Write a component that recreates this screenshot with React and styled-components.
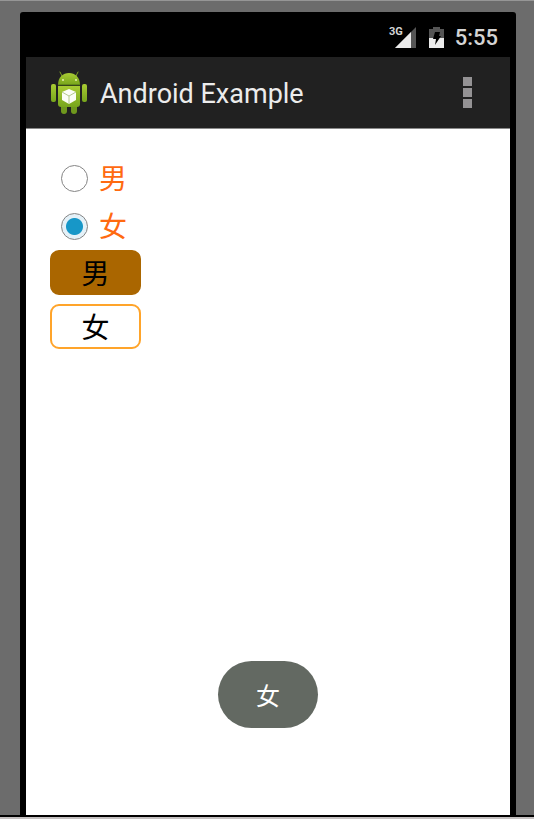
import React, { useState } from "react"
import styled, { createGlobalStyle } from "styled-components"

const GlobalStyle = createGlobalStyle`
  * {
    box-sizing: border-box;
  }

  body {
    margin: 0;
    font-family: Roboto, "Noto Sans CJK SC", sans-serif;
  }
`

const Desk = styled.div`
  display: flex;
  flex-direction: column;
  min-height: 100vh;
  padding: 11px 18px 0 20px;
  background: #6c6c6c;
  border-top: 1px solid #969696;
`

const Phone = styled.div`
  flex: 1;
  display: flex;
  flex-direction: column;
  padding: 0 6px;
  background: #000;
  border-radius: 3px 3px 0 0;
`

const Footer = styled.footer`
  height: 4px;
  margin: 0 -18px 0 -20px;
  background: #c4c0c0;
  border-top: 2px solid #000;
`

const StatusBar = styled.div`
  display: flex;
  align-items: center;
  justify-content: flex-end;
  height: 45px;
  padding: 6px 12px 0 0;
  color: #d4d4d4;
`

const Signal = styled.div`
  display: flex;
  align-items: flex-start;
  height: 22px;
  margin-right: 13px;
  font-size: 11px;
  font-weight: 700;
  line-height: 10px;

  svg {
    margin-left: -9px;
  }
`

const Clock = styled.time`
  margin-left: 11px;
  font-size: 22px;
  line-height: 26px;
  font-weight: 500;
`

const ActionBar = styled.header`
  display: flex;
  align-items: center;
  height: 72px;
  padding: 0 38px 0 24px;
  background: #212121;
  border-bottom: 1px solid #8a8a8a;
`

const Title = styled.h1`
  flex: 1;
  margin: 0 0 0 12px;
  padding-top: 2px;
  color: #ececec;
  font-size: 27px;
  font-weight: 400;
  line-height: 32px;
`

const MenuButton = styled.button`
  display: grid;
  gap: 2px;
  padding: 0;
  background: none;
  border: 0;
`

const Dot = styled.span`
  width: 9px;
  height: 9px;
  background: #949294;
`

const Screen = styled.main`
  position: relative;
  flex: 1;
  display: flex;
  flex-direction: column;
  align-items: flex-start;
  padding: 25px 24px;
  background: #fff;
`

const RadioRow = styled.label`
  display: flex;
  align-items: center;
  gap: 11px;
  height: 48px;
  padding-left: 11px;
  color: #ff6a10;
  font-size: 28px;
  line-height: 40px;
`

const RadioText = styled.span`
  padding-top: 4px;
`

const Radio = styled.input`
  appearance: none;
  width: 27px;
  height: 27px;
  margin: 0;
  background: #fff;
  border: 1px solid #858585;
  border-radius: 50%;

  &:checked {
    background: radial-gradient(circle, #1797c8 8px, #e4f1f8 9px);
  }
`

const Choices = styled.div`
  display: grid;
  gap: 9px;
`

const Choice = styled.button`
  width: 91px;
  height: 45px;
  padding: 4px 0 0;
  color: #000;
  background: ${props => (props.$filled ? "#aa6600" : "#fff")};
  border: 2px solid ${props => (props.$filled ? "#aa6600" : "#ffa42a")};
  border-radius: 9px;
  font-family: inherit;
  font-size: 28px;
  line-height: 36px;
`

const Toast = styled.div`
  position: absolute;
  bottom: 87px;
  left: 50%;
  transform: translateX(-50%);
  padding: 20px 38px 15px;
  color: #fff;
  background: #636962;
  border-radius: 34px;
  font-size: 24px;
  line-height: 32px;
`

function SignalIcon() {
  return (
    <svg width="22" height="22" viewBox="0 0 22 22" aria-hidden="true">
      <path d="M22 0V21H1Z" fill="#555" />
      <path d="M17 5V21H1Z" fill="#ebebeb" />
    </svg>
  )
}

function BatteryIcon() {
  return (
    <svg width="15" height="22" viewBox="0 0 15 22" aria-hidden="true">
      <path d="M0 2H4V0H11V2H15V12H0Z" fill="#555" />
      <path d="M0 11H15V21H0Z" fill="#ebebeb" />
      <path d="M6 5H11L10 9H12L6 18L7 12H4Z" fill="#000" />
    </svg>
  )
}

function AndroidLogo() {
  return (
    <svg width="38" height="44" viewBox="0 0 38 44" aria-hidden="true">
      <defs>
        <linearGradient id="robot" x1="0" y1="0" x2="0" y2="1">
          <stop offset="0" stopColor="#a9cc33" />
          <stop offset="1" stopColor="#77a51c" />
        </linearGradient>
      </defs>
      <path
        d="M12 5L10 1M26 5L28 1"
        stroke="#7c9e26"
        strokeWidth="1"
        strokeLinecap="round"
      />
      <path d="M8 14C8 6 13 2 19 2S30 6 30 14Z" fill="url(#robot)" />
      <circle cx="13" cy="9" r="1" fill="#e6f2b4" />
      <circle cx="26" cy="9" r="1" fill="#e6f2b4" />
      <rect x="1" y="13" width="5" height="18" rx="2" fill="url(#robot)" />
      <rect x="32" y="13" width="5" height="18" rx="2" fill="url(#robot)" />
      <rect x="11" y="32" width="6" height="11" rx="3" fill="#6f981d" />
      <rect x="21" y="32" width="6" height="11" rx="3" fill="#6f981d" />
      <path
        d="M8 15H30V33Q30 36 27 36H11Q8 36 8 33Z"
        fill="url(#robot)"
      />
      <path d="M8 14H30" stroke="#4f6c14" />
      <path d="M19 18L26 21V29L19 33L12 29V21Z" fill="#fbfdf5" />
      <path
        d="M12 21L19 25L26 21M19 25V33"
        fill="none"
        stroke="#b4c88c"
        strokeWidth="1"
      />
    </svg>
  )
}

const options = ["男", "女"]

function App() {
  const [selected, setSelected] = useState("女")
  const [filled, setFilled] = useState("男")

  return (
    <>
      <GlobalStyle />
      <Desk>
        <Phone>
          <StatusBar>
            <Signal>
              3G
              <SignalIcon />
            </Signal>
            <BatteryIcon />
            <Clock>5:55</Clock>
          </StatusBar>
          <ActionBar>
            <AndroidLogo />
            <Title>Android Example</Title>
            <MenuButton type="button" aria-label="More options">
              <Dot />
              <Dot />
              <Dot />
            </MenuButton>
          </ActionBar>
          <Screen>
            {options.map(option => (
              <RadioRow key={option}>
                <Radio
                  type="radio"
                  name="gender"
                  value={option}
                  checked={selected === option}
                  onChange={() => setSelected(option)}
                />
                <RadioText>{option}</RadioText>
              </RadioRow>
            ))}
            <Choices>
              {options.map(option => (
                <Choice
                  key={option}
                  type="button"
                  aria-pressed={filled === option}
                  $filled={filled === option}
                  onClick={() => setFilled(option)}
                >
                  {option}
                </Choice>
              ))}
            </Choices>
            <Toast role="status">{selected}</Toast>
          </Screen>
        </Phone>
        <Footer />
      </Desk>
    </>
  )
}

export default App
